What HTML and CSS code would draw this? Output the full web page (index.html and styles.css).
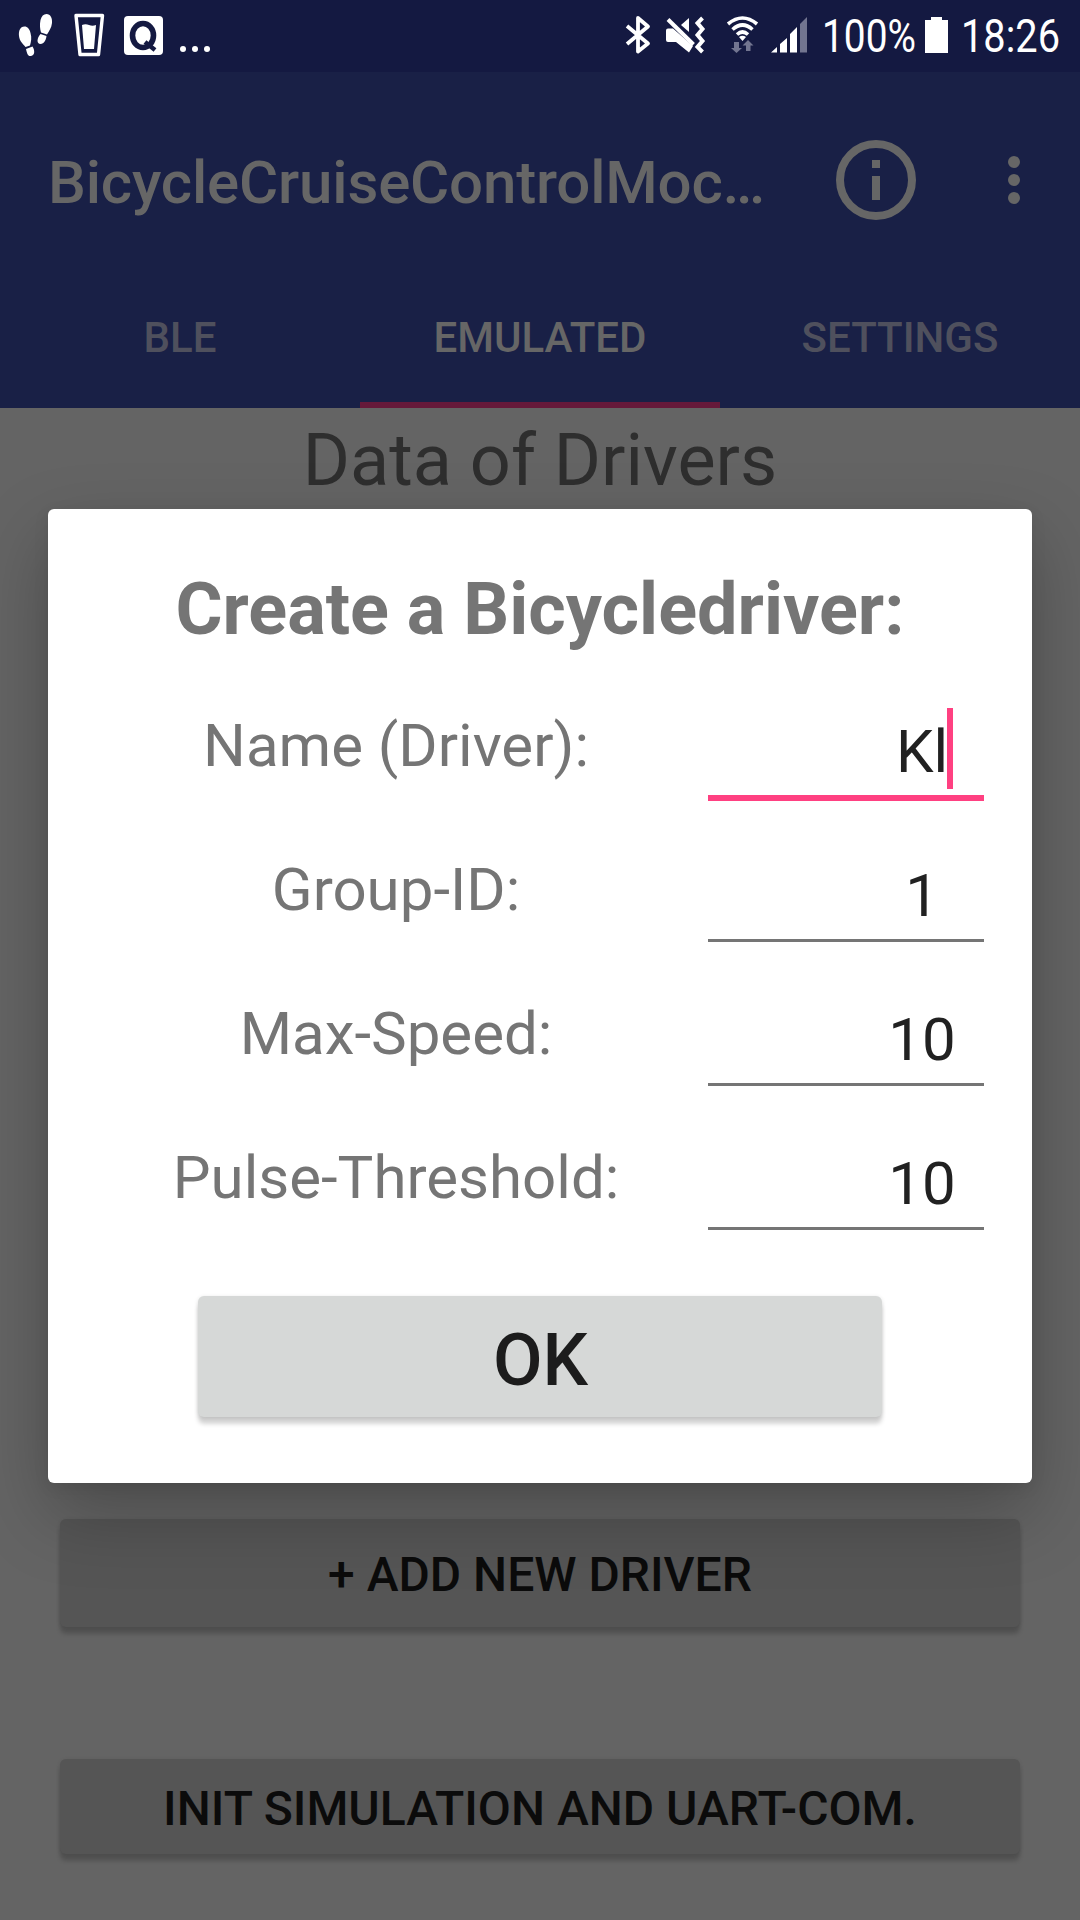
FILE: index.html
```html
<!DOCTYPE html>
<html lang="en">
<head>
<meta charset="utf-8">
<title>BicycleCruiseControl</title>
<link rel="stylesheet" href="styles.css">
</head>
<body>
<div class="screen">
  <header class="status">
    <svg class="status-left" width="220" height="72" viewBox="0 0 220 72" fill="#fff">
      <g>
        <path d="M24.500 26.500C20 26.500 18.500 31 19 36C19.500 41 23 44 25.500 47L30 45.500C31 42 32 38 30.500 33C29.500 29 27.500 26.500 24.500 26.500Z"/>
        <path d="M26 49L32.500 46.500C35 50 35 55.500 31 56C27.500 56.500 27 53 26 49Z"/>
        <path d="M46.500 14C50.500 14 52.500 18 52 23C51.500 28 49 31 47 34.500L41 32.500C40 29 39.500 25 40.500 20C41.500 16 43.500 14 46.500 14Z"/>
        <path d="M40.500 34L46.500 36C46 40 44 44 40.500 44C36.500 43.500 36.500 39 40.500 34Z"/>
      </g>
      <path d="M76 15.500H102.500L98.500 54.500H80Z" fill="none" stroke="#fff" stroke-width="3.400" stroke-linejoin="round"/>
      <path d="M82 25Q85.500 23.500 89 25T96 25L94 49H84Z"/>
      <rect x="124" y="16" width="39" height="39" rx="4"/>
      <ellipse cx="143" cy="35.500" rx="10.500" ry="12" fill="none" stroke="#141941" stroke-width="5.600"/>
      <path d="M145 42L155 50" stroke="#141941" stroke-width="4.500"/>
      <circle cx="183" cy="49" r="3"/><circle cx="195" cy="49" r="3"/><circle cx="207" cy="49" r="3"/>
    </svg>
    <svg class="status-right" width="480" height="72" viewBox="0 0 480 72" fill="#fff">
      <path d="M27 26L48 43.500L38 51.500V18L48 26.500L27 44" fill="none" stroke="#fff" stroke-width="3.800" stroke-linejoin="round"/>
      <path d="M68 28.500H73L93 46L89 52.500L76 42H68Q66 42 66 40V30.500Q66 28.500 68 28.500Z"/>
      <path d="M89 18V32L81 25Z"/>
      <path d="M68 19.500L93.500 44.500" stroke="#fff" stroke-width="4"/>
      <path d="M102.500 18L97.500 23L102.500 29L97.500 35L102.500 41L97.500 47L102.500 52" fill="none" stroke="#fff" stroke-width="4"/>
      <g fill="none" stroke="#fff" stroke-width="3.600"><path d="M128 24Q142.500 12 157 24"/><path d="M132.500 29.500Q142.500 20.500 152.500 29.500"/><path d="M137 34.500Q142.500 29.500 148 34.500"/></g>
      <path d="M139 37Q142.500 34.500 146 37L142.500 41Z"/>
      <path d="M134 42H139V48H142L136.500 53L131 48H134ZM146 51V45.500H142.500L148 40L153.500 45.500H150.500V51Z" fill="#727590"/>
      <path d="M171 52.500L177 47V52.500ZM180 44L187 38V52.500H180ZM190 34L197 27V52.500H190Z"/>
      <path d="M200 24L207 17V52.500H200Z" fill="#727590"/>
      <text class="clock" x="222" y="52.300" textLength="94" lengthAdjust="spacingAndGlyphs">100%</text>
      <path d="M325 20H331V17H342V20H348V53H325Z"/>
      <text class="clock" x="361" y="52.300" textLength="99" lengthAdjust="spacingAndGlyphs">18:26</text>
    </svg>
  </header>
  <div class="appbar">
    <h1 class="app-title">BicycleCruiseControlMoc…</h1>
    <svg class="info" width="80" height="80" viewBox="0 0 80 80"><circle cx="40" cy="40" r="36" fill="none" stroke="#666" stroke-width="8"/><path d="M36 20H44V28H36ZM36 36H44V60H36Z" fill="#666"/></svg>
    <svg class="more" width="12" height="48" viewBox="0 0 12 48" fill="#666"><circle cx="6" cy="6" r="6"/><circle cx="6" cy="24" r="6"/><circle cx="6" cy="42" r="6"/></svg>
  </div>
  <nav class="tabs">
    <div class="tab">BLE</div><div class="tab active">EMULATED</div><div class="tab">SETTINGS</div>
  </nav>
  <main class="content">
    <h2 class="page-title">Data of Drivers</h2>
    <div class="button add">+ ADD NEW DRIVER</div>
    <div class="button init">INIT SIMULATION AND UART-COM.</div>
  </main>
  <section class="dialog">
    <h2 class="dialog-title">Create a Bicycledriver:</h2>
    <div class="fields">
      <div class="row"><span class="label">Name (Driver):</span><div class="input focus">Kl<i class="caret"></i></div></div>
      <div class="row"><span class="label">Group-ID:</span><div class="input">1</div></div>
      <div class="row"><span class="label">Max-Speed:</span><div class="input">10</div></div>
      <div class="row"><span class="label">Pulse-Threshold:</span><div class="input">10</div></div>
    </div>
    <div class="ok">OK</div>
  </section>
</div>
</body>
</html>
```
FILE: styles.css
```css
* { box-sizing: border-box; }
body { margin: 0; font-family: Roboto, "Liberation Sans", sans-serif; }
h1, h2 { margin: 0; font-weight: 400; }
svg { display: block; flex: none; }
.screen { position: relative; width: 1080px; height: 1920px; overflow: hidden; background: #646464; display: flex; flex-direction: column; }
.status { height: 72px; flex: none; background: #141941; display: flex; justify-content: space-between; }
.clock { font-size: 46px; }
.appbar { height: 216px; flex: none; background: #192046; display: flex; align-items: center; padding-left: 48px; }
.app-title { width: 788px; color: #666; font-size: 60px; line-height: 70px; font-weight: 500; letter-spacing: -0.17px; white-space: nowrap; padding-top: 6px; }
.more { margin-left: 92px; }
.tabs { height: 120px; flex: none; background: #192046; display: grid; grid-template-columns: repeat(3, 1fr); }
.tab { color: #4f505d; font-size: 42px; font-weight: 500; line-height: 100px; text-align: center; border-bottom: 6px solid transparent; }
.tab.active { color: #666; border-color: #66193a; }
.content { flex: 1; display: flex; flex-direction: column; padding: 0 60px; }
.page-title { height: 1111px; padding-top: 11px; color: #2e2e2e; font-size: 72px; line-height: 84px; text-align: center; }
.button { border-radius: 6px; background: #555; color: #0b0b0b; font-size: 48px; font-weight: 500; text-align: center; box-shadow: 0 7px 4px rgba(0,0,0,.18), 0 1px 4px rgba(0,0,0,.1); }
.add { height: 108px; line-height: 112px; }
.init { height: 95px; line-height: 100px; margin-top: 132px; }
.dialog { position: absolute; left: 48px; top: 509px; width: 984px; height: 974px; border-radius: 6px; background: #fff; display: flex; flex-direction: column; align-items: center; padding-top: 59px; box-shadow: 0 30px 72px rgba(0,0,0,.25), 0 4px 16px rgba(0,0,0,.08); }
.dialog-title { color: #757575; font-size: 72px; line-height: 84px; font-weight: 700; }
.fields { width: 888px; padding-top: 23px; }
.row { height: 144px; display: grid; grid-template-columns: 600px 276px; column-gap: 12px; align-items: start; }
.label { color: #757575; font-size: 60px; line-height: 70px; text-align: center; padding-top: 36px; }
.input { position: relative; height: 123px; padding: 42px 0 0 152px; color: #212121; font-size: 60px; line-height: 70px; text-align: center; border-bottom: 3px solid #757575; }
.input.focus { height: 126px; border-bottom: 6px solid #ff4081; }
.caret { position: absolute; left: 239px; top: 33px; width: 6px; height: 81px; background: #ff4081; }
.ok { width: 684px; height: 121px; margin-top: 45px; border-radius: 6px; background: #d6d8d7; color: #1c1c1c; font-size: 72px; line-height: 130px; padding-left: 1px; font-weight: 500; text-align: center; box-shadow: 0 7px 4px rgba(0,0,0,.17), 0 1px 4px rgba(0,0,0,.12); }
```
